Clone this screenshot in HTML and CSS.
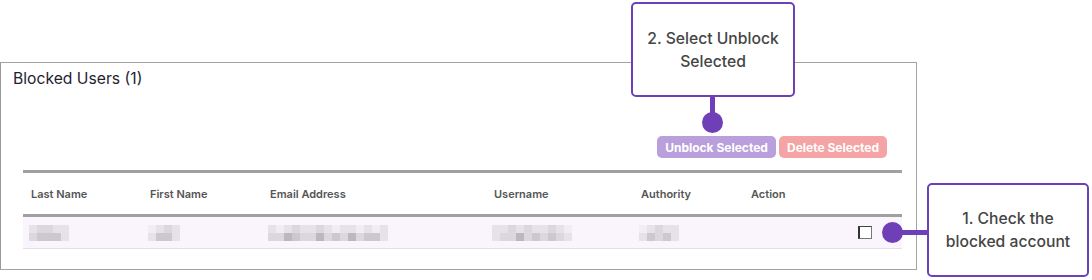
FILE: index.html
```html
<!DOCTYPE html>
<html lang="en">
  <head>
    <meta charset="UTF-8" />
    <title>Blocked Users</title>
    <link rel="stylesheet" href="styles.css">
  </head>
  <body>
    <div class="panel">
      <div class="panel-title">Blocked Users (1)</div>

      <div class="actions">
        <button class="btn btn-unblock">Unblock Selected</button>
        <button class="btn btn-delete">Delete Selected</button>
      </div>

      <div class="users-table">
        <div class="row head">
          <div>Last Name</div>
          <div>First Name</div>
          <div>Email Address</div>
          <div>Username</div>
          <div>Authority</div>
          <div>Action</div>
        </div>
        <div class="row body">
          <div><span class="blur cols5"><i class="b1"></i><i class="b2"></i><i class="b2"></i><i class="b1"></i><i class="b1"></i><i class="b2"></i><i class="b3"></i><i class="b3"></i><i class="b3"></i><i class="b1"></i></span></div>
          <div><span class="blur cols4"><i class="b0"></i><i class="b1"></i><i class="b2"></i><i class="b1"></i><i class="b1"></i><i class="b3"></i><i class="b3"></i><i class="b1"></i></span></div>
          <div><span class="blur cols15"><i class="b1"></i><i class="b0"></i><i class="b1"></i><i class="b2"></i><i class="b1"></i><i class="b1"></i><i class="b2"></i><i class="b1"></i><i class="b0"></i><i class="b1"></i><i class="b1"></i><i class="b0"></i><i class="b1"></i><i class="b0"></i><i class="b1"></i><i class="b2"></i><i class="b2"></i><i class="b4"></i><i class="b3"></i><i class="b2"></i><i class="b2"></i><i class="b4"></i><i class="b2"></i><i class="b3"></i><i class="b2"></i><i class="b4"></i><i class="b2"></i><i class="b3"></i><i class="b3"></i><i class="b1"></i></span></div>
          <div><span class="blur cols10"><i class="b1"></i><i class="b1"></i><i class="b2"></i><i class="b1"></i><i class="b2"></i><i class="b1"></i><i class="b1"></i><i class="b2"></i><i class="b1"></i><i class="b0"></i><i class="b1"></i><i class="b2"></i><i class="b2"></i><i class="b4"></i><i class="b2"></i><i class="b3"></i><i class="b2"></i><i class="b3"></i><i class="b2"></i><i class="b1"></i></span></div>
          <div><span class="blur cols5"><i class="b0"></i><i class="b1"></i><i class="b2"></i><i class="b1"></i><i class="b1"></i><i class="b1"></i><i class="b3"></i><i class="b2"></i><i class="b3"></i><i class="b1"></i></span></div>
          <div class="check-cell"><span class="checkbox"></span></div>
        </div>
      </div>
    </div>

    <!-- annotation callouts -->
    <div class="callout callout-unblock">2. Select Unblock<br>Selected</div>
    <div class="stem stem-unblock"></div>
    <div class="dot dot-unblock"></div>

    <div class="callout callout-check">1. Check the<br>blocked account</div>
    <div class="stem stem-check"></div>
    <div class="dot dot-check"></div>
  </body>
</html>
```

FILE: styles.css
```css
body {
  margin: 0;
  padding: 0;
  background: #fff;
  font-family: "Inter", "Liberation Sans", sans-serif;
  position: relative;
  height: 280px;
  overflow: hidden;
}

.panel {
  box-sizing: border-box;
  width: 917px;
  height: 208px;
  margin-top: 62px;
  border: 1px solid #a3a3a3;
  border-left-color: #9a9a9a;
}

.panel-title {
  padding: 7px 12px 0;
  font-size: 15.7px;
  line-height: 18px;
  color: #1f2330;
}

.actions {
  display: flex;
  justify-content: flex-end;
  gap: 3px;
  margin-top: 48px;
  padding-right: 29px;
}

.btn {
  height: 22px;
  border: none;
  border-radius: 5px;
  padding: 0;
  white-space: nowrap;
  font-family: inherit;
  font-size: 12px;
  font-weight: 700;
  color: #fff;
}

.btn-unblock {
  width: 119px;
  background-color: #b9a0dc;
}

.btn-delete {
  width: 108px;
  background-color: #f4a4a4;
}

.users-table {
  margin: 12px 14px 0 22px;
}

.row {
  display: grid;
  grid-template-columns: 119px 120px 224px 147px 110px 1fr;
  padding-left: 8px;
  align-items: center;
}

.row.head {
  height: 41px;
  border-top: 3px solid #a0a0a0;
  border-bottom: 3px solid #a0a0a0;
  font-size: 11px;
  font-weight: 600;
  color: #555;
}

.row.body {
  height: 31px;
  background-color: #faf5fd;
  border-bottom: 1px solid #e4dfe7;
}

.blur {
  display: grid;
  grid-auto-rows: 8px;
  margin-left: -2px;
}

.cols4 { grid-template-columns: repeat(4, 8px); }
.cols5 { grid-template-columns: repeat(5, 8px); }
.cols10 { grid-template-columns: repeat(10, 8px); }
.cols15 { grid-template-columns: repeat(15, 8px); }

.blur i { display: block; }
.b0 { background: #f2edf3; }
.b1 { background: #e7e1e9; }
.b2 { background: #dcd6de; }
.b3 { background: #cdc7cf; }
.b4 { background: #bdb7c0; }

.check-cell {
  display: flex;
  justify-content: flex-end;
  padding-right: 30px;
}

.checkbox {
  box-sizing: border-box;
  width: 14px;
  height: 13px;
  background: #fff;
  border: 1px solid #777;
  border-left: 2px solid #333;
  border-top-color: #444;
}

.callout {
  position: absolute;
  box-sizing: border-box;
  display: flex;
  align-items: center;
  justify-content: center;
  text-align: center;
  background: #fff;
  border: 2px solid #6f3fb7;
  border-radius: 5px;
  font-size: 15.7px;
  font-weight: 500;
  line-height: 23px;
  color: #454545;
}

.callout-unblock {
  left: 631px;
  top: 2px;
  width: 164px;
  height: 95px;
}

.callout-check {
  left: 927px;
  top: 183px;
  width: 162px;
  height: 94px;
}

.stem {
  position: absolute;
  background: #6f3fb7;
}

.stem-unblock {
  left: 710px;
  top: 96px;
  width: 5px;
  height: 20px;
}

.stem-check {
  left: 895px;
  top: 230px;
  width: 33px;
  height: 5px;
}

.dot {
  position: absolute;
  width: 21px;
  height: 21px;
  border-radius: 50%;
  background: #6f3fb7;
}

.dot-unblock {
  left: 702px;
  top: 112px;
}

.dot-check {
  left: 882px;
  top: 222px;
}
```
